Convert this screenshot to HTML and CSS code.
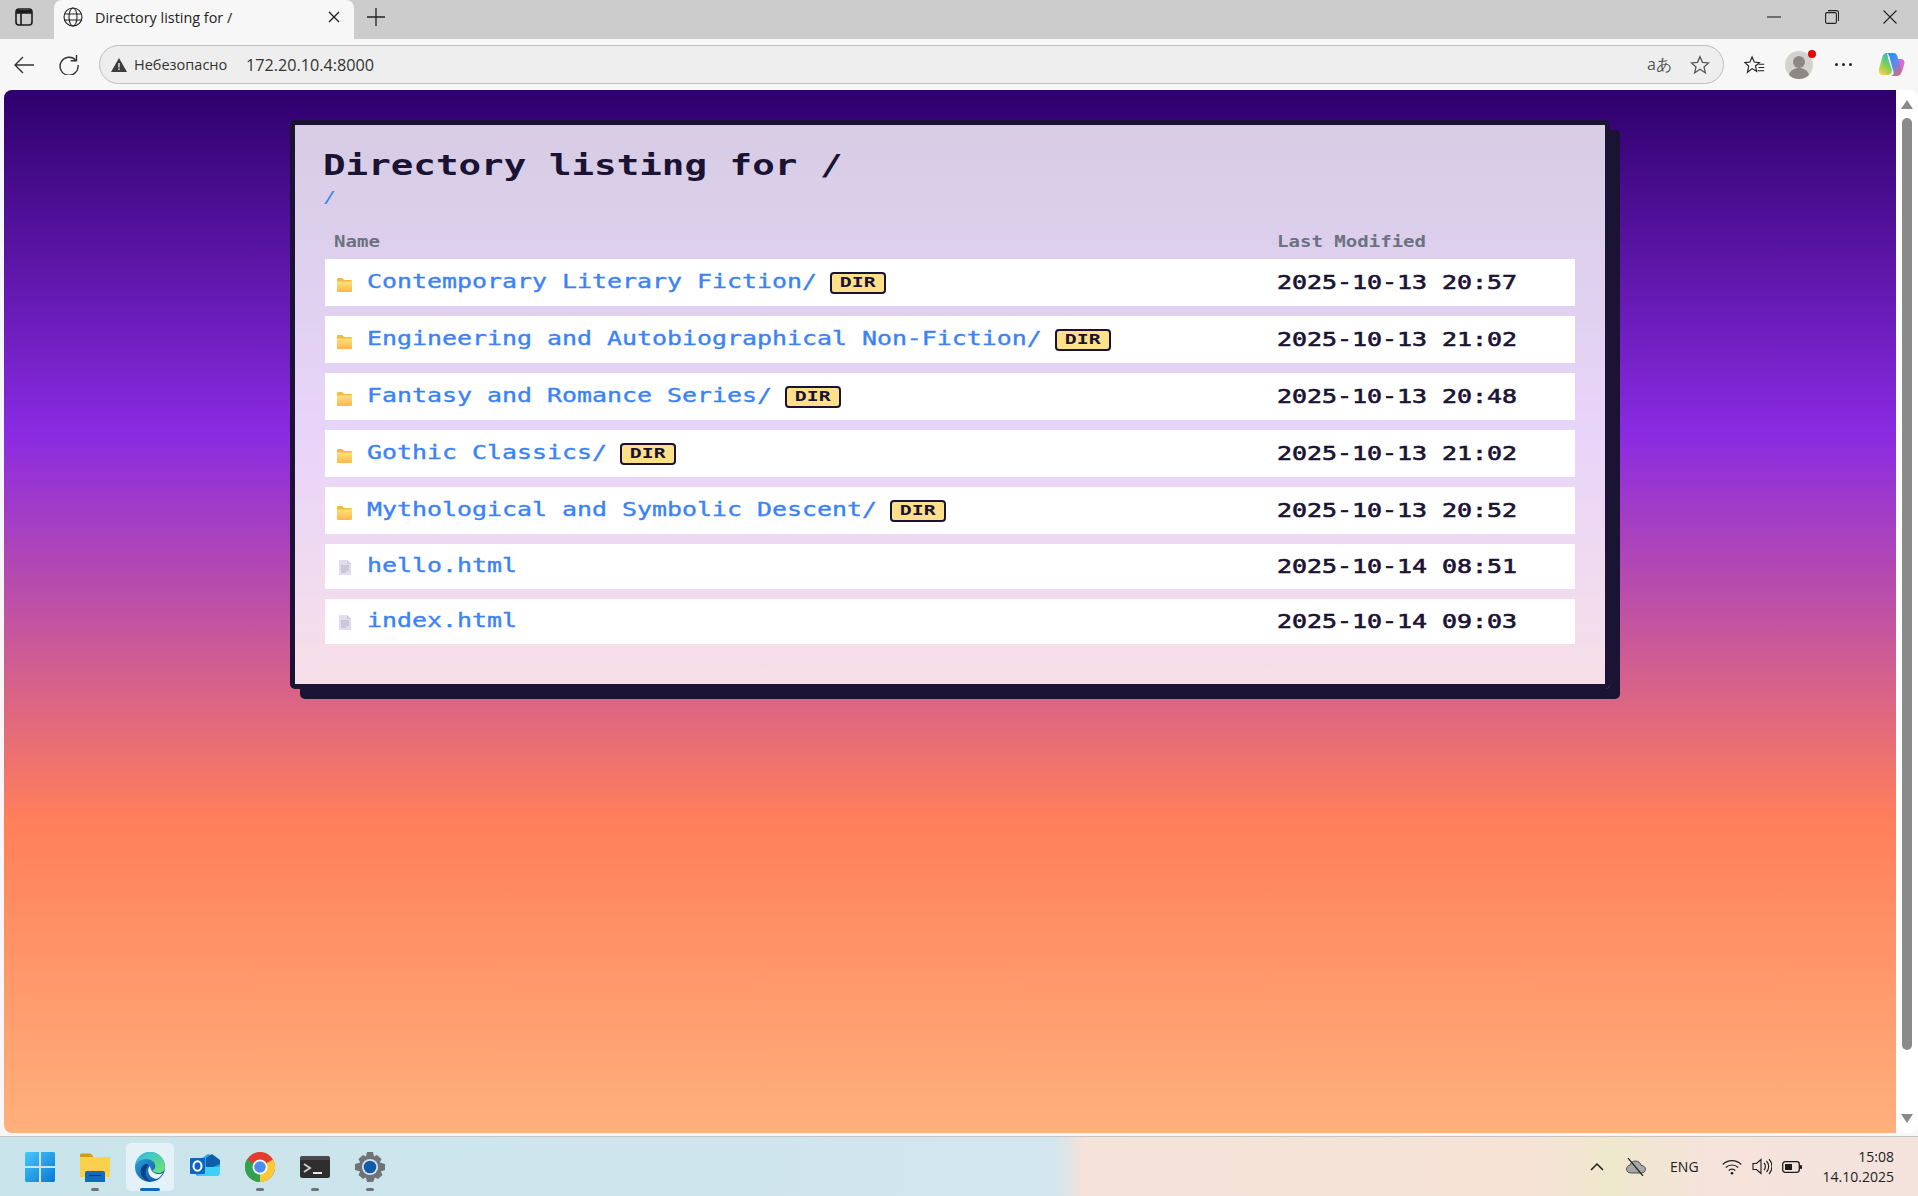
FILE: index.html
```html
<!DOCTYPE html>
<html lang="en">
<head>
  <meta charset="UTF-8">
  <title>Directory listing for /</title>
  <link rel="stylesheet" href="styles.css">
</head>
<body>
  <svg class="defs" width="0" height="0" aria-hidden="true">
    <defs>
      <linearGradient id="folderFront" x1="0" y1="0" x2="0" y2="1">
        <stop offset="0" stop-color="#ffe27a"/>
        <stop offset="1" stop-color="#fdb64a"/>
      </linearGradient>
      <linearGradient id="edgeBlue" x1="0" y1="0" x2="1" y2="1">
        <stop offset="0" stop-color="#2fa4e3"/>
        <stop offset="1" stop-color="#0a4f9c"/>
      </linearGradient>
      <linearGradient id="edgeGreen" x1="0" y1="0" x2="1" y2="1">
        <stop offset="0" stop-color="#2db9ee"/>
        <stop offset="1" stop-color="#6fe86a"/>
      </linearGradient>
      <linearGradient id="winBlue" x1="0" y1="0" x2="1" y2="1">
        <stop offset="0" stop-color="#45c8fb"/>
        <stop offset="1" stop-color="#0a78d6"/>
      </linearGradient>
      <linearGradient id="copilot" x1="0" y1="0" x2="1" y2="1">
        <stop offset="0" stop-color="#1f8fe8"/>
        <stop offset="0.5" stop-color="#5a8cf0"/>
        <stop offset="1" stop-color="#f0605f"/>
      </linearGradient>
      <linearGradient id="copilotWarm" x1="0.7" y1="0" x2="0.2" y2="1">
        <stop offset="0" stop-color="#2bb6d8"/>
        <stop offset="0.5" stop-color="#7fcf5a"/>
        <stop offset="1" stop-color="#f7d23e"/>
      </linearGradient>
      <linearGradient id="copilotWing" x1="0" y1="0" x2="1" y2="1">
        <stop offset="0" stop-color="#b56cf0"/>
        <stop offset="1" stop-color="#ee6fc0"/>
      </linearGradient>
      <symbol id="folder" viewBox="0 0 15 14">
        <path d="M0 1.500C0 .7.500 0 1.300 0h3.400c.6 0 1 .3 1.400.8L7 2h6.700c.7 0 1.300.6 1.300 1.300V5H0z" fill="#f5b93f"/>
        <path d="M0 3.500h15v9.200c0 .7-.6 1.300-1.300 1.300H1.300C.6 14 0 13.400 0 12.700z" fill="url(#folderFront)"/>
      </symbol>
      <symbol id="file" viewBox="0 0 12 15">
        <path d="M0 1c0-.6.4-1 1-1h7l4 4v10c0 .6-.4 1-1 1H1c-.6 0-1-.4-1-1z" fill="#e2dcef"/>
        <path d="M8 0l4 4H9c-.6 0-1-.4-1-1z" fill="#cfc8e0"/>
        <path d="M2 6h8M2 8h8M2 10h8M2 12h5" stroke="#b3afc2" stroke-width="1"/>
      </symbol>
    </defs>
  </svg>

  <div class="tabstrip">
    <div class="tab-side">
      <svg class="ico" width="18" height="18" viewBox="0 0 18 18" fill="none" stroke="#1c1c1c" stroke-width="1.600"><rect x="1" y="1" width="16" height="16" rx="3"/><path d="M1 5h16M6 5v12"/><path d="M2 2h14v3H2z" fill="#1c1c1c" stroke="none"/></svg>
    </div>
    <div class="tab">
      <svg class="ico" width="20" height="20" viewBox="0 0 20 20" fill="none" stroke="#222" stroke-width="1.100"><circle cx="10" cy="10" r="9"/><ellipse cx="10" cy="10" rx="4" ry="9"/><path d="M1.500 7h17M1.500 13h17"/></svg>
      <span class="tab-title">Directory listing for /</span>
      <svg class="ico tab-close" width="12" height="12" viewBox="0 0 12 12" stroke="#222" stroke-width="1.400"><path d="M1 1l10 10M11 1L1 11"/></svg>
    </div>
    <svg class="ico tab-new" width="18" height="18" viewBox="0 0 18 18" stroke="#222" stroke-width="1.300"><path d="M9 0v18M0 9h18"/></svg>
    <div class="window-ctl">
      <svg width="14" height="14" viewBox="0 0 14 14" stroke="#222" stroke-width="1.100"><path d="M0 7h14"/></svg>
      <svg width="14" height="14" viewBox="0 0 14 14" fill="none" stroke="#222" stroke-width="1.100"><rect x=".6" y="2.600" width="10.800" height="10.800" rx="1.500"/><path d="M3 .6h8.500c1 0 2 1 2 2V11"/></svg>
      <svg width="14" height="14" viewBox="0 0 14 14" stroke="#222" stroke-width="1.100"><path d="M.5.5l13 13M13.500.5l-13 13"/></svg>
    </div>
  </div>

  <div class="toolbar">
    <svg class="ico btn-back" width="20" height="18" viewBox="0 0 20 18" fill="none" stroke="#333" stroke-width="1.400"><path d="M20 9H1M9 1L1 9l8 8"/></svg>
    <svg class="ico btn-reload" width="20" height="20" viewBox="0 0 20 20" fill="none" stroke="#333" stroke-width="1.400"><path d="M17 5.500A9 9 0 1 0 19 10"/><path d="M17.500 0v5.800h-5.800"/></svg>
    <div class="addressbar">
      <div class="security">
        <svg width="16" height="14" viewBox="0 0 16 14"><path d="M8 0l8 14H0z" fill="#3d3d3d"/><path d="M7.300 5h1.400v4.500H7.300zM7.300 10.500h1.400V12H7.300z" fill="#eee"/></svg>
        <span>Небезопасно</span>
      </div>
      <span class="url">172.20.10.4:8000</span>
      <div class="address-end">
        <span class="translate">aあ</span>
        <svg width="20" height="20" viewBox="0 0 24 24" fill="none" stroke="#555" stroke-width="1.500"><path d="M12 2l3 6.800 7.300.7-5.500 4.800 1.700 7.200L12 17l-6.500 4.500 1.700-7.200L1.700 9.500 9 8.800z"/></svg>
      </div>
    </div>
    <svg class="ico btn-fav" width="21" height="20" viewBox="0 0 26 24" fill="none" stroke="#222" stroke-width="1.400"><path d="M10 2l2.700 6.300 6.300.7-4.800 4.200 1.500 6.600L10 16.500 4.300 21l1.500-7.800L1 9l6.300-.7z"/><path d="M18 11h7M18 15h7M17 19h8" stroke-width="1.300"/></svg>
    <div class="avatar">
      <svg width="28" height="28" viewBox="0 0 28 28"><circle cx="14" cy="14" r="14" fill="#d4d2cf"/><circle cx="14" cy="11" r="6" fill="#8b8885"/><path d="M4 24c1.500-5 5.500-7 10-7s8.500 2 10 7c-2.500 2.500-6 4-10 4s-7.500-1.500-10-4z" fill="#8b8885"/></svg>
      <span class="avatar-dot"></span>
    </div>
    <span class="btn-more"><i></i><i></i><i></i></span>
    <svg class="ico btn-copilot" width="28" height="28" viewBox="0 0 28 28"><path d="M10 2C7.500 2 6 3.500 5.500 5.500L2 18c-.8 3 1 6 4 6h5c1.800 0 3-1 3.500-2.800L15 19 11 7c-.5-2-.5-4-1-5z" fill="url(#copilotWarm)"/><path d="M17 8h6.500c2.800 0 4.500 2 3.800 4.800l-1.500 5.700c-.5 2-2 3.500-4 3.500h-1z" fill="url(#copilotWing)"/><path d="M10 2h6.500c2 0 3.200 1.200 3.800 3l4 14c.8 3-1.300 6-4.300 6H13c2 0 3.300-1.200 3.800-3L12.500 6C12 4 11 2.700 10 2z" fill="url(#copilot)"/></svg>
  </div>

  <div class="viewport">
    <main class="page">
      <section class="card">
        <h1>Directory listing for /</h1>
        <div class="crumbs"><a href="#">/</a></div>
        <table class="listing">
          <thead>
            <tr><th class="col-name"><span>Name</span></th><th class="col-date"><span>Last Modified</span></th></tr>
          </thead>
          <tbody>
            <tr class="is-dir">
              <td class="cell-name"><svg class="entry-icon"><use href="#folder"/></svg><a href="#" style="--n:30">Contemporary Literary Fiction/</a><span class="badge"><b>DIR</b></span></td>
              <td class="cell-date"><span>2025-10-13 20:57</span></td>
            </tr>
            <tr class="is-dir">
              <td class="cell-name"><svg class="entry-icon"><use href="#folder"/></svg><a href="#" style="--n:45">Engineering and Autobiographical Non-Fiction/</a><span class="badge"><b>DIR</b></span></td>
              <td class="cell-date"><span>2025-10-13 21:02</span></td>
            </tr>
            <tr class="is-dir">
              <td class="cell-name"><svg class="entry-icon"><use href="#folder"/></svg><a href="#" style="--n:27">Fantasy and Romance Series/</a><span class="badge"><b>DIR</b></span></td>
              <td class="cell-date"><span>2025-10-13 20:48</span></td>
            </tr>
            <tr class="is-dir">
              <td class="cell-name"><svg class="entry-icon"><use href="#folder"/></svg><a href="#" style="--n:16">Gothic Classics/</a><span class="badge"><b>DIR</b></span></td>
              <td class="cell-date"><span>2025-10-13 21:02</span></td>
            </tr>
            <tr class="is-dir">
              <td class="cell-name"><svg class="entry-icon"><use href="#folder"/></svg><a href="#" style="--n:34">Mythological and Symbolic Descent/</a><span class="badge"><b>DIR</b></span></td>
              <td class="cell-date"><span>2025-10-13 20:52</span></td>
            </tr>
            <tr class="is-file">
              <td class="cell-name"><svg class="entry-icon file-icon"><use href="#file"/></svg><a href="#" style="--n:10">hello.html</a></td>
              <td class="cell-date"><span>2025-10-14 08:51</span></td>
            </tr>
            <tr class="is-file">
              <td class="cell-name"><svg class="entry-icon file-icon"><use href="#file"/></svg><a href="#" style="--n:10">index.html</a></td>
              <td class="cell-date"><span>2025-10-14 09:03</span></td>
            </tr>
          </tbody>
        </table>
      </section>
    </main>
    <div class="scrollbar">
      <span class="arrow-up"></span>
      <span class="thumb"></span>
      <span class="arrow-down"></span>
    </div>
  </div>

  <footer class="taskbar">
    <div class="task-icons">
      <div class="task-item">
        <svg width="30" height="30" viewBox="0 0 30 30"><path d="M1.500 0H14v14H0V1.500C0 .7.700 0 1.500 0zM16 0h12.500c.8 0 1.500.7 1.500 1.500V14H16zM0 16h14v14H1.500C.7 30 0 29.300 0 28.500zM16 16h14v12.500c0 .8-.7 1.500-1.500 1.500H16z" fill="url(#winBlue)"/></svg>
      </div>
      <div class="task-item is-running">
        <svg width="30" height="30" viewBox="0 0 30 30"><path d="M0 3c0-1 .7-1.500 1.500-1.500h8c1 0 1.500.5 2 1L13 4v3H0z" fill="#d99a13"/><path d="M0 5h30v20H0z" fill="#fbd04c"/><path d="M5 21c0-1.500 1-2 2-2h16c1 0 2 .5 2 2v9H5z" fill="#0f6cbd"/><path d="M9 23.500h12" stroke="#073f75" stroke-width="1.200"/></svg>
      </div>
      <div class="task-item is-active">
        <svg width="32" height="32" viewBox="0 0 32 32"><circle cx="16" cy="16" r="15" fill="url(#edgeBlue)"/><path d="M16 1c8.300 0 15 6.700 15 15 0 3.500-2.600 6-6.500 6-3 0-5.500-1-6-2.800 1.800-.8 2.800-2.200 2.800-4 0-4.200-4.500-7.200-9.300-7.200-4.800 0-9 2.800-10.800 6.500C2.800 7.200 8.700 1 16 1z" fill="url(#edgeGreen)"/><path d="M12 13c-5 1.500-6.500 7-4.500 11.500C9 27.800 12.800 30.400 17 31c-3.500-2-5.500-5.500-5.500-9 0-3.500 1.500-6 3.500-7.500-.8-.8-1.800-1.500-3-1.500z" fill="#0a4286"/><path d="M16 15c-1.500 1.500-2.200 4-1.500 6.500 1 4 4.500 6.500 8.500 6.300 2.700-1.300 4.800-3.400 6-6-1.300 1-3.200 1.500-5.500 1.200-4-.4-7-3.500-7.500-8z" fill="#e8f3f8"/></svg>
      </div>
      <div class="task-item">
        <svg width="30" height="30" viewBox="0 0 30 30"><path d="M6 10l12-8 6 2 6 5v11c0 1.500-1 4-3 4H8c-1.500 0-2-1-2-2z" fill="#28a8ea"/><path d="M16 6l6-4 8 6v4l-7 3H16z" fill="#0f5fa8"/><path d="M10 15h20v5c0 2-1 4-3 4H8l2-3z" fill="#3fd0f5"/><rect x="0" y="6" width="15" height="16" rx="1" fill="#0a66c2"/><ellipse cx="7.500" cy="14" rx="4" ry="4.800" fill="none" stroke="#fff" stroke-width="2"/></svg>
      </div>
      <div class="task-item is-running">
        <svg width="30" height="30" viewBox="0 0 30 30"><circle cx="15" cy="15" r="15" fill="#e33b2e"/><path d="M15 15L28 7.500A15 15 0 0 1 15 30z" fill="#fcc934"/><path d="M15 15l-7.500 13A15 15 0 0 1 2 7.500z" fill="#2fa44f"/><path d="M15 15L15 30A15 15 0 0 1 7.500 28z" fill="#2fa44f"/><circle cx="15" cy="15" r="7.500" fill="#fff"/><circle cx="15" cy="15" r="5.800" fill="#4a8cf0"/></svg>
      </div>
      <div class="task-item is-running">
        <svg width="30" height="22" viewBox="0 0 30 22"><rect width="30" height="22" rx="2.500" fill="#2e2e2e"/><path d="M0 2.500C0 1 1 0 2.500 0h25C29 0 30 1 30 2.500V4H0z" fill="#4a4a4a"/><path d="M4 8l6 4-6 4" fill="none" stroke="#c8c8c8" stroke-width="2"/><path d="M13 17h9" stroke="#e8e8e8" stroke-width="2"/></svg>
      </div>
      <div class="task-item is-running">
        <svg width="30" height="30" viewBox="0 0 30 30"><path d="M12 0h6l1 4.500 3-1.500 4.500 4-1.700 3.500L30 12v6l-4.200 1.500 1.700 3.500-4.500 4-3-1.500L18 30h-6l-1-4.500-3 1.500-4.500-4 1.700-3.500L0 18v-6l5.200-1.500L3.500 7 8 3l3 1.500z" fill="#6f7276"/><circle cx="15" cy="15" r="8" fill="#d6e6f2"/><circle cx="15" cy="15" r="6.300" fill="#0f5ca8"/></svg>
      </div>
    </div>
    <div class="tray">
      <svg width="14" height="9" viewBox="0 0 14 9" fill="none" stroke="#1c1c1c" stroke-width="1.500"><path d="M1 8l6-6 6 6"/></svg>
      <svg class="tray-cloud" width="20" height="18" viewBox="0 0 20 18"><path d="M5 15c-3 0-4.500-2-4.500-4 0-2 1.500-3.500 3.500-3.700C4.500 4.500 7 3 9.500 3c2.800 0 5 1.800 5.500 4.300 2.500.2 4.500 1.700 4.500 3.900 0 2-1.500 3.800-4 3.800z" fill="#a6a8a8" stroke="#333" stroke-width=".8"/><path d="M2 0l15 18" stroke="#222" stroke-width="1.200"/></svg>
      <span class="tray-lang">ENG</span>
      <svg class="tray-wifi" width="20" height="16" viewBox="0 0 20 16" fill="none" stroke="#1c1c1c" stroke-width="1.200"><path d="M.8 5.500a13 13 0 0 1 18.400 0M3.800 8.500a9 9 0 0 1 12.400 0M6.800 11.500a4.500 4.500 0 0 1 6.400 0"/><circle cx="10" cy="14.300" r="1.300" fill="#1c1c1c" stroke="none"/></svg>
      <svg class="tray-sound" width="20" height="17" viewBox="0 0 20 17" fill="none" stroke="#1c1c1c" stroke-width="1.100"><path d="M1 5.500h3.500L9 1.500v14l-4.500-4H1z"/><path d="M12 5a5 5 0 0 1 0 7M14.500 3a8 8 0 0 1 0 11M17 1a11 11 0 0 1 0 15"/></svg>
      <svg class="tray-battery" width="20" height="12" viewBox="0 0 20 12"><rect x=".7" y=".7" width="16.600" height="10.600" rx="2.500" fill="none" stroke="#1c1c1c" stroke-width="1.300"/><rect x="3" y="3" width="7" height="6" fill="#1c1c1c"/><rect x="18" y="4" width="2" height="4" rx=".8" fill="#1c1c1c"/></svg>
      <div class="clock"><span>15:08</span><span>14.10.2025</span></div>
    </div>
  </footer>
</body>
</html>
```

FILE: styles.css
```css
* {
  box-sizing: border-box;
}

html, body {
  margin: 0;
  height: 100%;
}

body {
  display: flex;
  flex-direction: column;
  height: 1196px;
  overflow: hidden;
  background-color: #f7f7f7;
  color: #222;
  font-family: 'Open Sans', 'Noto Sans', sans-serif;
}

.defs {
  position: absolute;
}

.ico {
  flex: none;
  display: block;
}

/* browser chrome */
.tabstrip {
  display: flex;
  align-items: center;
  flex: none;
  height: 39px;
  padding-bottom: 5px;
  background-color: #cccccc;
}

.tab-side {
  display: flex;
  justify-content: center;
  width: 54px;
  padding-right: 6px;
}

.tab {
  display: flex;
  align-items: center;
  align-self: stretch;
  width: 300px;
  margin-bottom: -5px;
  padding: 0 14px 5px 9px;
  background-color: #f7f7f7;
  border-top-left-radius: 8px;
  border-top-right-radius: 8px;
}

.tab-title {
  flex: 1;
  margin-left: 12px;
  font-size: 14.400px;
  color: #222;
}

.tab-new {
  margin-left: 13px;
}

.window-ctl {
  display: flex;
  gap: 44px;
  margin-left: auto;
  padding-right: 21px;
}

.toolbar {
  display: flex;
  align-items: center;
  flex: none;
  height: 51px;
  padding-left: 14px;
  background-color: #f7f7f7;
}

.btn-reload {
  margin-left: 25px;
}

.addressbar {
  display: flex;
  align-items: center;
  width: 1625px;
  height: 39px;
  margin-left: 20px;
  padding: 0 13px 0 11px;
  background-color: #eeeeee;
  border: 1px solid #bdbdbd;
  border-radius: 20px;
}

.security {
  display: flex;
  align-items: center;
  gap: 7px;
  width: 135px;
  font-size: 14.500px;
  color: #333;
}

.url {
  font-size: 16.200px;
  color: #333;
}

.address-end {
  display: flex;
  align-items: center;
  gap: 18px;
  margin-left: auto;
}

.translate {
  font-size: 16px;
  color: #555;
}

.btn-fav {
  margin-left: 20px;
}

.avatar {
  position: relative;
  width: 28px;
  height: 28px;
  margin-left: 20px;
}

.avatar-dot {
  position: absolute;
  top: -1px;
  right: -3px;
  width: 8px;
  height: 8px;
  background-color: #e60000;
  border-radius: 50%;
}

.btn-more {
  display: flex;
  gap: 4px;
  margin-left: 22px;
}

.btn-more i {
  width: 3px;
  height: 3px;
  background-color: #222;
  border-radius: 50%;
}

.btn-copilot {
  margin-left: 25px;
}

/* page area */
.viewport {
  display: flex;
  flex: none;
  height: 1047px;
  padding: 0 0 3px 4px;
  background-color: #f7f7f7;
  border-bottom: 1px solid #c4c4c4;
}

.page {
  flex: 1;
  padding-top: 30px;
  background: linear-gradient(180deg, #2e006c 0%, #8a2be2 33%, #ff7f5a 70%, #ffb07c 100%);
  border-radius: 8px 0 0 8px;
}

.scrollbar {
  display: flex;
  flex-direction: column;
  align-items: center;
  flex: none;
  width: 22px;
  padding-top: 10px;
  background-color: #ffffff;
  border-radius: 0 8px 8px 0;
}

.arrow-up,
.arrow-down {
  width: 0;
  height: 0;
  border-left: 6px solid transparent;
  border-right: 6px solid transparent;
}

.arrow-up {
  border-bottom: 9px solid #8a8a8a;
}

.arrow-down {
  margin-top: 64px;
  border-top: 9px solid #8a8a8a;
}

.thumb {
  width: 10px;
  height: 932px;
  margin-top: 9px;
  background-color: #8a8a8a;
  border-radius: 5px;
}

/* listing: no pixel font here, so the mono glyphs get stretched to its 15px cell */
.card {
  width: 1320px;
  margin: 0 auto;
  padding: 25px 30px 30px;
  background-color: rgba(255, 255, 255, 0.8);
  border: 5px solid #1a1333;
  border-radius: 5px;
  box-shadow: 10px 10px 0 #1a1333;
  font-family: 'DejaVu Sans Mono', 'Liberation Mono', monospace;
}

h1 {
  height: 32px;
  margin: 0 0 0 -2px;
  font-size: 28px;
  line-height: 32px;
  font-weight: bold;
  color: #1a1333;
  transform: scaleX(1.34);
  transform-origin: left;
}

.crumbs {
  height: 20px;
  margin-top: 6px;
  font-size: 15px;
  line-height: 20px;
  font-weight: normal;
}

.crumbs a {
  display: inline-block;
  color: #3b82f6;
  text-decoration: none;
  transform: scaleX(1.4);
}

.listing {
  width: 1250px;
  margin-top: 14px;
  border-collapse: separate;
  border-spacing: 0 10px;
  table-layout: fixed;
}

th {
  height: 17px;
  padding: 2px 0 0 9px;
  font-size: 16px;
  line-height: 15px;
  font-weight: bold;
  text-align: left;
  color: #6b7280;
}

th span {
  display: inline-block;
  transform: scaleX(1.19);
  transform-origin: left;
}

.col-date {
  width: 310px;
  padding-left: 12px;
}

td {
  padding: 0;
  background-color: #ffffff;
}

.is-dir td {
  height: 47px;
}

.is-file td {
  height: 45px;
}

.cell-name {
  padding-left: 12px;
  font-size: 19px;
}

.cell-name a {
  display: inline-block;
  position: relative;
  top: -2px;
  margin-right: calc(var(--n) * 3.560px);
  color: #3b82f6;
  text-decoration: none;
  vertical-align: middle;
  -webkit-text-stroke: 0.35px #3b82f6;
  transform: scaleX(1.311);
  transform-origin: left;
}

.entry-icon {
  display: inline-block;
  width: 15px;
  height: 14px;
  margin-right: 15px;
  vertical-align: -3px;
}

.file-icon {
  width: 12px;
  height: 15px;
  margin-left: 2px;
  margin-right: 16px;
  vertical-align: -2px;
}

.badge {
  display: inline-block;
  width: 56px;
  height: 22px;
  margin-left: 13px;
  background-color: #ffe08a;
  border: 2px solid #1a1333;
  border-radius: 4px;
  font-size: 14px;
  line-height: 17px;
  text-align: center;
  color: #1a1333;
  vertical-align: middle;
}

.badge b {
  display: inline-block;
  transform: scaleX(1.42);
}

.cell-date {
  padding-left: 12px;
  font-size: 19px;
  color: #1a1333;
}

.cell-date span {
  display: inline-block;
  position: relative;
  top: -1px;
  -webkit-text-stroke: 0.6px #1a1333;
  transform: scaleX(1.311);
  transform-origin: left;
}

/* taskbar */
.taskbar {
  display: flex;
  align-items: center;
  justify-content: space-between;
  flex: 1;
  padding: 0 24px 0 12px;
  background: linear-gradient(90deg, #c9e4ea 0%, #d2e6ef 55%, #f5e2d9 56.500%, #f6e3d6 80%, #eee8cc 84%, #f5e3dc 89%, #f4e3dd 100%);
}

.task-icons {
  display: flex;
}

.task-item {
  display: flex;
  align-items: center;
  justify-content: center;
  position: relative;
  width: 55px;
  height: 48px;
}

.is-running::after,
.is-active::after {
  content: "";
  position: absolute;
  bottom: 0;
  left: 50%;
  width: 8px;
  height: 3px;
  margin-left: -4px;
  background-color: #6f7276;
  border-radius: 2px;
}

.is-active {
  width: 48px;
  margin: 0 3.500px;
  background-color: #e4f1f6;
  border-radius: 5px;
}

.is-active::after {
  width: 20px;
  margin-left: -10px;
  background-color: #0f6cbd;
}

.tray {
  display: flex;
  align-items: center;
}

.tray-cloud {
  margin-left: 22px;
}

.tray-lang {
  margin-left: 24px;
  font-size: 14px;
  color: #222;
}

.tray-wifi {
  margin-left: 23px;
}

.tray-sound {
  margin-left: 10px;
}

.tray-battery {
  margin-left: 10px;
}

.clock {
  display: flex;
  flex-direction: column;
  align-items: flex-end;
  margin-left: 21px;
  font-size: 14px;
  line-height: 20px;
  color: #222;
}
```
